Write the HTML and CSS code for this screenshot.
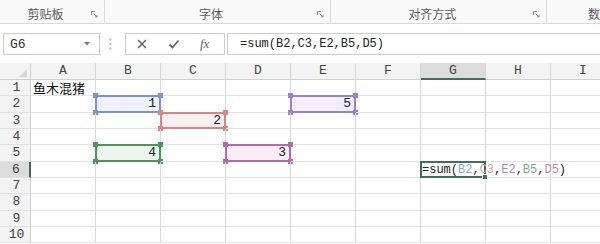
FILE: index.html
```html
<!DOCTYPE html>
<html>
<head>
<meta charset="utf-8">
<link rel="stylesheet" href="styles.css">
</head>
<body>
<div class="ribbon">
  <div class="grp g1"><span class="lbl">剪贴板</span><svg class="launch" viewBox="0 0 7 7"><path d="M0.5 4V0.5H4M2.5 2.5L6 6M6 4V6H4" fill="none" stroke="#8a8a8a" stroke-width="1"/></svg></div>
  <div class="grp g2"><span class="lbl">字体</span><svg class="launch" viewBox="0 0 7 7"><path d="M0.5 4V0.5H4M2.5 2.5L6 6M6 4V6H4" fill="none" stroke="#8a8a8a" stroke-width="1"/></svg></div>
  <div class="grp g3"><span class="lbl">对齐方式</span><svg class="launch" viewBox="0 0 7 7"><path d="M0.5 4V0.5H4M2.5 2.5L6 6M6 4V6H4" fill="none" stroke="#8a8a8a" stroke-width="1"/></svg></div>
  <div class="grp g4"><span class="lbl4">数</span></div>
</div>

<div class="fbar">
  <div class="namebox"><span>G6</span><svg class="dd" viewBox="0 0 6 4"><path d="M0 0H6L3 3.5Z" fill="#7a7a7a"/></svg></div>
  <svg class="dots" viewBox="0 0 3 12"><rect x="0.5" y="0.5" width="2" height="2" fill="#bdbdbd"/><rect x="0.5" y="5" width="2" height="2" fill="#bdbdbd"/><rect x="0.5" y="9.5" width="2" height="2" fill="#bdbdbd"/></svg>
  <div class="btnbox">
    <svg class="ico" viewBox="0 0 12 12"><path d="M2 2L10 10M10 2L2 10" stroke="#666" stroke-width="1.6" fill="none"/></svg>
    <svg class="ico" viewBox="0 0 12 12"><path d="M1.5 6.5L4.5 9.5L10.5 2.5" stroke="#666" stroke-width="1.8" fill="none"/></svg>
    <span class="fx">fx</span>
  </div>
  <div class="finput">=sum(B2,C3,E2,B5,D5)</div>
</div>

<div class="sheet">
  <div class="corner"><svg class="tri" viewBox="0 0 8 8"><path d="M8 0V8H0Z" fill="#d6d6d6"/></svg></div>
  <div class="ch">A</div><div class="ch">B</div><div class="ch">C</div><div class="ch">D</div><div class="ch">E</div><div class="ch">F</div><div class="ch chsel">G</div><div class="ch">H</div><div class="ch">I</div>

  <div class="rh">1</div>
  <div class="c"><span class="cjk">鱼木混猪</span></div><div class="c"></div><div class="c"></div><div class="c"></div><div class="c"></div><div class="c"></div><div class="c"></div><div class="c"></div><div class="c"></div>

  <div class="rh">2</div>
  <div class="c"></div>
  <div class="c num fill-blue"><span class="box blue"><i class="h tl"></i><i class="h tr"></i><i class="h bl"></i><i class="h br"></i></span>1</div>
  <div class="c"></div><div class="c"></div>
  <div class="c num fill-purple"><span class="box purple"><i class="h tl"></i><i class="h tr"></i><i class="h bl"></i><i class="h br"></i></span>5</div>
  <div class="c"></div><div class="c"></div><div class="c"></div><div class="c"></div>

  <div class="rh">3</div>
  <div class="c"></div><div class="c"></div>
  <div class="c num fill-red"><span class="box red"><i class="h tl"></i><i class="h tr"></i><i class="h bl"></i><i class="h br"></i></span>2</div>
  <div class="c"></div><div class="c"></div><div class="c"></div><div class="c"></div><div class="c"></div><div class="c"></div>

  <div class="rh">4</div>
  <div class="c"></div><div class="c"></div><div class="c"></div><div class="c"></div><div class="c"></div><div class="c"></div><div class="c"></div><div class="c"></div><div class="c"></div>

  <div class="rh">5</div>
  <div class="c"></div>
  <div class="c num fill-green"><span class="box green"><i class="h tl"></i><i class="h tr"></i><i class="h bl"></i><i class="h br"></i></span>4</div>
  <div class="c"></div>
  <div class="c num fill-mag"><span class="box mag"><i class="h tl"></i><i class="h tr"></i><i class="h bl"></i><i class="h br"></i></span>3</div>
  <div class="c"></div><div class="c"></div><div class="c"></div><div class="c"></div><div class="c"></div>

  <div class="rh rhsel">6</div>
  <div class="c"></div><div class="c"></div><div class="c"></div><div class="c"></div><div class="c"></div><div class="c"></div>
  <div class="c active"><span class="sel"><i class="fh"></i></span><span class="ftext">=sum(<span class="t-blue">B2</span>,<span class="t-red">C3</span>,<span class="t-purple">E2</span>,<span class="t-green">B5</span>,<span class="t-mag">D5</span>)</span></div>
  <div class="c"></div><div class="c"></div>

  <div class="rh">7</div>
  <div class="c"></div><div class="c"></div><div class="c"></div><div class="c"></div><div class="c"></div><div class="c"></div><div class="c"></div><div class="c"></div><div class="c"></div>
  <div class="rh">8</div>
  <div class="c"></div><div class="c"></div><div class="c"></div><div class="c"></div><div class="c"></div><div class="c"></div><div class="c"></div><div class="c"></div><div class="c"></div>
  <div class="rh">9</div>
  <div class="c"></div><div class="c"></div><div class="c"></div><div class="c"></div><div class="c"></div><div class="c"></div><div class="c"></div><div class="c"></div><div class="c"></div>
  <div class="rh">10</div>
  <div class="c"></div><div class="c"></div><div class="c"></div><div class="c"></div><div class="c"></div><div class="c"></div><div class="c"></div><div class="c"></div><div class="c"></div>
</div>
</body>
</html>
```

FILE: styles.css
```css
html, body {
  margin: 0;
  padding: 0;
}
body {
  width: 600px;
  height: 244px;
  overflow: hidden;
  background: #ffffff;
  font-family: "Noto Sans CJK SC", sans-serif;
}

/* ribbon group labels */
.ribbon {
  display: flex;
  height: 23px;
  background: #f9f9f9;
  border-bottom: 1px solid #d8d8d8;
}
.grp {
  display: flex;
  align-items: flex-start;
  height: 23px;
  box-sizing: border-box;
  border-right: 1px solid #dddddd;
}
.g1 { width: 105px; }
.g2 { width: 227px; }
.g3 { width: 216px; }
.g4 { flex: 1; border-right: none; padding-left: 41px; }
.lbl, .lbl4 {
  flex: 1;
  text-align: center;
  font-size: 12px;
  line-height: 16px;
  padding-top: 6px;
  color: #5a5a5a;
}
.lbl4 { text-align: left; }
.launch {
  width: 7px;
  height: 7px;
  margin: 11px 6px 0 0;
}

/* formula bar */
.fbar {
  display: flex;
  align-items: center;
  margin-top: 9px;
  height: 22px;
}
.namebox {
  margin-left: 3px;
  width: 97px;
  height: 22px;
  box-sizing: border-box;
  border: 1px solid #cccccc;
  display: flex;
  align-items: center;
  padding-left: 6px;
  font: 13px "Liberation Mono", monospace;
  color: #333333;
}
.dd {
  width: 6px;
  height: 4px;
  margin-left: auto;
  margin-right: 9px;
}
.dots {
  width: 3px;
  height: 12px;
  margin: 0 13px 0 9px;
}
.btnbox {
  width: 100px;
  height: 22px;
  box-sizing: border-box;
  border: 1px solid #cccccc;
  display: flex;
  align-items: center;
  padding-left: 10px;
  gap: 20px;
}
.ico {
  width: 12px;
  height: 12px;
}
.fx {
  font: italic 13px "Liberation Serif", serif;
  color: #666666;
}
.finput {
  flex: 1;
  height: 22px;
  box-sizing: border-box;
  margin-left: 2px;
  border: 1px solid #cccccc;
  border-right: none;
  padding-left: 12px;
  font: 12px/20px "Liberation Mono", monospace;
  color: #222222;
}

/* sheet */
.sheet {
  margin-top: 8px;
  display: grid;
  grid-template-columns: 31px repeat(9, 65px);
  grid-template-rows: 17px repeat(10, 16.33px);
}
.corner, .ch, .rh {
  background: #f3f3f3;
  box-sizing: border-box;
  color: #444444;
  font: 13px/16px "Liberation Mono", monospace;
}
.corner {
  border-right: 1px solid #cfcfcf;
  border-bottom: 1px solid #cfcfcf;
  position: relative;
}
.tri {
  position: absolute;
  right: 3px;
  bottom: 2px;
  width: 8px;
  height: 8px;
}
.ch {
  text-align: center;
  border-right: 1px solid #d6d6d6;
  border-bottom: 1px solid #cfcfcf;
}
.chsel {
  background: #dcdcdc;
  border-bottom: 2px solid #3f6f58;
}
.rh {
  text-align: center;
  border-right: 1px solid #cfcfcf;
  border-bottom: 1px solid #e0e0e0;
  line-height: 15px;
  padding-left: 3px;
}
.rhsel {
  background: #dcdcdc;
  border-right: 2px solid #3f6f58;
}
.c {
  position: relative;
  box-sizing: border-box;
  border-right: 1px solid #d9d9d9;
  border-bottom: 1px solid #e2e2e2;
  font: 13px/15px "Liberation Mono", monospace;
  color: #222222;
  white-space: nowrap;
}
.cjk {
  font: 400 13px/15px "Noto Sans CJK SC", sans-serif;
  color: #111111;
  padding-left: 2px;
  position: relative;
  z-index: 1;
}
.num {
  text-align: right;
  padding-right: 4px;
}

.fill-blue { background: #eef1fa; }
.fill-red { background: #fbeeef; }
.fill-purple { background: #f3eef8; }
.fill-green { background: #eef4ee; }
.fill-mag { background: #f8edf5; }

.box {
  position: absolute;
  left: -1px;
  top: -1px;
  right: -1px;
  bottom: -1px;
  border: 2px solid currentColor;
}
.blue { color: #7c95c6; }
.red { color: #d78585; }
.purple { color: #9d82bf; }
.green { color: #4f9559; }
.mag { color: #b46aa4; }
.h {
  position: absolute;
  width: 5px;
  height: 5px;
  background: currentColor;
}
.tl { left: -4px; top: -4px; }
.tr { right: -4px; top: -4px; }
.bl { left: -4px; bottom: -4px; }
.br { right: -4px; bottom: -4px; }

.active { overflow: visible; }
.sel {
  position: absolute;
  left: -1px;
  top: -1px;
  right: -1px;
  bottom: -1px;
  border: 2px solid #3f6f58;
  z-index: 1;
}
.fh {
  position: absolute;
  right: -4px;
  bottom: -4px;
  width: 4px;
  height: 4px;
  background: #3f6f58;
  border: 1px solid #ffffff;
}
.ftext {
  position: relative;
  z-index: 2;
  padding-left: 1px;
  font: 12px/15px "Liberation Mono", monospace;
  color: #222222;
}
.t-blue { color: #8fa6d3; }
.t-red { color: #d99a9c; }
.t-purple { color: #a390bf; }
.t-green { color: #7eac84; }
.t-mag { color: #c08ab5; }
```
